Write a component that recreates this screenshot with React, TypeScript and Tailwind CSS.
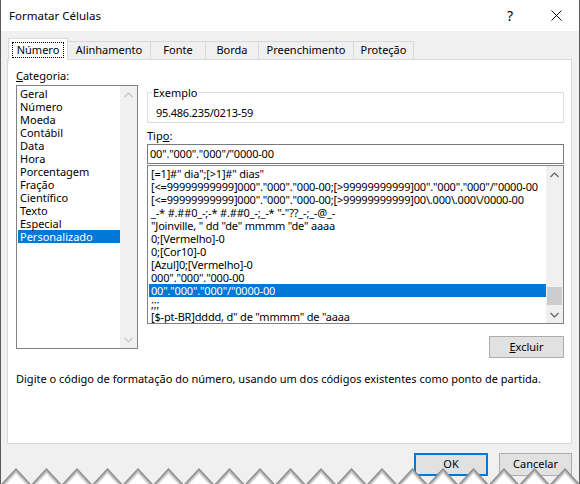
import React from 'react';

const categorias = [
  'Geral',
  'Número',
  'Moeda',
  'Contábil',
  'Data',
  'Hora',
  'Porcentagem',
  'Fração',
  'Científico',
  'Texto',
  'Especial',
  'Personalizado',
];

const formatos = [
  '[=1]#" dia";[>1]#" dias"',
  '[<=99999999999]000"."000"."000-00;[>99999999999]00"."000"."000"/"0000-00',
  '[<=99999999999]000"."000"."000-00;[>99999999999]00\\.000\\.000\\/0000-00',
  '_-* #.##0_-;-* #.##0_-;_-* "-"??_-;_-@_-',
  '"Joinville, " dd "de" mmmm "de" aaaa',
  '0;[Vermelho]-0',
  '0;[Cor10]-0',
  '[Azul]0;[Vermelho]-0',
  '000"."000"."000-00',
  '00"."000"."000"/"0000-00',
  ';;;',
  '[$-pt-BR]dddd, d" de "mmmm" de "aaaa',
];

const abas = [
  { nome: 'Número', largura: 'w-[60px]' },
  { nome: 'Alinhamento', largura: 'w-[84px]' },
  { nome: 'Fonte', largura: 'w-[56px]' },
  { nome: 'Borda', largura: 'w-[54px]' },
  { nome: 'Preenchimento', largura: 'w-[96px]' },
  { nome: 'Proteção', largura: 'w-[61px]' },
];

function Seta({ para, cor }: { para: 'cima' | 'baixo'; cor: string }) {
  return (
    <svg width="9" height="6" viewBox="0 0 9 6">
      <path
        d={para === 'cima' ? 'M0.5 5 L4.5 1 L8.5 5' : 'M0.5 1 L4.5 5 L8.5 1'}
        fill="none"
        stroke={cor}
        strokeWidth="1.2"
      />
    </svg>
  );
}

// borda rasgada no pé da janela
function Serrilha() {
  const dentes = (dy: number) => {
    let d = `M-20 ${24 + dy}`;
    for (let k = -1; k < 20; k++) {
      const x = 15 + k * 30.5;
      d += ` L${x} ${4 + dy} L${x + 15.25} ${20.5 + dy}`;
    }
    return d + ` L600 ${24 + dy} L600 40 L-20 40 Z`;
  };
  const camadas: [number, string][] = [
    [0, '#888888'],
    [1.5, '#a9a9a9'],
    [3, '#c8c8c8'],
    [4.5, '#e4e4e4'],
    [6, '#ffffff'],
  ];
  return (
    <svg className="absolute bottom-0 left-0 z-20" width="580" height="20" viewBox="0 0 580 20">
      {camadas.map(([dy, cor]) => (
        <path key={dy} d={dentes(dy)} fill={cor} />
      ))}
    </svg>
  );
}

export default function App() {
  return (
    <div className="relative w-[580px] h-[484px] overflow-hidden bg-[#f0f0f0] border-x border-[#5a5a5a] font-['Noto_Sans',sans-serif] text-[11px] text-black">
      {/* barra de título */}
      <div className="flex items-center h-[31px] bg-white">
        <span className="pl-[8px] text-[11.5px]">Formatar Células</span>
        <div className="ml-auto flex h-full">
          <div className="w-[46px] flex items-center justify-center text-[14px]">?</div>
          <div className="w-[46px] flex items-center justify-center">
            <svg width="11" height="11" viewBox="0 0 11 11">
              <path d="M0.5 0.5 L10.5 10.5 M10.5 0.5 L0.5 10.5" stroke="#111" strokeWidth="1" />
            </svg>
          </div>
        </div>
      </div>

      {/* abas */}
      <div className="flex items-end h-[28px] pl-[7px]">
        {abas.map((aba, i) =>
          i === 0 ? (
            <div
              key={aba.nome}
              className={`${aba.largura} relative z-10 -mb-px h-[22px] bg-white border-x border-t border-[#d9d9d9] flex items-center justify-center pt-[1px]`}
            >
              <span className="border border-dotted border-black px-[4px] leading-[14px]">{aba.nome}</span>
            </div>
          ) : (
            <div
              key={aba.nome}
              className={`${aba.largura} -ml-px h-[18px] bg-[#f0f0f0] border-x border-t border-[#d9d9d9] flex items-center justify-center`}
            >
              {aba.nome}
            </div>
          )
        )}
      </div>

      {/* painel Número */}
      <div className="ml-[6px] w-[565px] h-[385px] bg-white border border-[#d9d9d9] flex flex-col pt-[8px] pl-[8px]">
        <div className="flex">
          <div className="w-[122px]">
            <div className="h-[16px] leading-[16px]">
              <span className="underline">C</span>ategoria:
            </div>
            <div className="mt-[1px] h-[264px] border border-[#828282] flex">
              <div className="flex-1 pt-[1px]">
                {categorias.map((c) => (
                  <div
                    key={c}
                    className={`ml-[1px] h-[13px] leading-[13px] pl-[2px] ${
                      c === 'Personalizado' ? 'bg-[#0078d7] text-white' : ''
                    }`}
                  >
                    {c}
                  </div>
                ))}
              </div>
              <div className="w-[17px] bg-[#f0f0f0] flex flex-col justify-between">
                <div className="h-[17px] flex items-center justify-center">
                  <Seta para="cima" cor="#c3c3c3" />
                </div>
                <div className="h-[17px] flex items-center justify-center">
                  <Seta para="baixo" cor="#c3c3c3" />
                </div>
              </div>
            </div>
          </div>

          <div className="ml-[9px] w-[417px] flex flex-col">
            <div className="mt-[24px] relative h-[31px] border border-[#dcdcdc] pl-[8px] pt-[12px] leading-[16px] tracking-[-0.25px]">
              <span className="absolute left-[4px] top-[-8px] bg-white px-px leading-[16px] tracking-normal">
                Exemplo
              </span>
              95.486.235/0213-59
            </div>
            <div className="mt-[5px] h-[16px] leading-[16px]">
              Tip<span className="underline">o</span>:
            </div>
            <div className="h-[20px] border border-[#7a7a7a] flex items-center pl-[2px] tracking-[-0.2px]">
              00"."000"."000"/"0000-00
            </div>
            <div className="mt-[1px] h-[159px] border border-[#828282] flex">
              <div className="flex-1 pt-[1px] overflow-hidden whitespace-nowrap tracking-[-0.18px]">
                {formatos.map((f, i) => (
                  <div
                    key={f}
                    className={`ml-[1px] h-[13px] leading-[13px] pl-[2px] ${
                      i === 9 ? 'bg-[#0078d7] text-white' : ''
                    }`}
                  >
                    {f}
                  </div>
                ))}
              </div>
              <div className="w-[17px] bg-[#f0f0f0] flex flex-col">
                <div className="h-[17px] flex items-center justify-center">
                  <Seta para="cima" cor="#606060" />
                </div>
                <div className="flex-1">
                  <div className="mt-[104px] mx-px h-[18px] bg-[#cdcdcd]" />
                </div>
                <div className="h-[17px] flex items-center justify-center">
                  <Seta para="baixo" cor="#606060" />
                </div>
              </div>
            </div>
            <button className="mt-[12px] self-end w-[75px] h-[22px] bg-[#e1e1e1] border border-[#adadad] flex items-center justify-center">
              <span>
                <span className="underline">E</span>xcluir
              </span>
            </button>
          </div>
        </div>
        <p className="mt-[13px] leading-[16px]">
          Digite o código de formatação do número, usando um dos códigos existentes como ponto de partida.
        </p>
      </div>

      {/* botões */}
      <div className="mt-[9px] flex justify-end gap-[11px] pr-[7px]">
        <button className="w-[74px] h-[23px] bg-[#e1e1e1] border-2 border-[#0078d7] flex items-center justify-center">
          OK
        </button>
        <button className="w-[73px] h-[23px] bg-[#e1e1e1] border border-[#adadad] flex items-center justify-center">
          Cancelar
        </button>
      </div>

      <Serrilha />
    </div>
  );
}
